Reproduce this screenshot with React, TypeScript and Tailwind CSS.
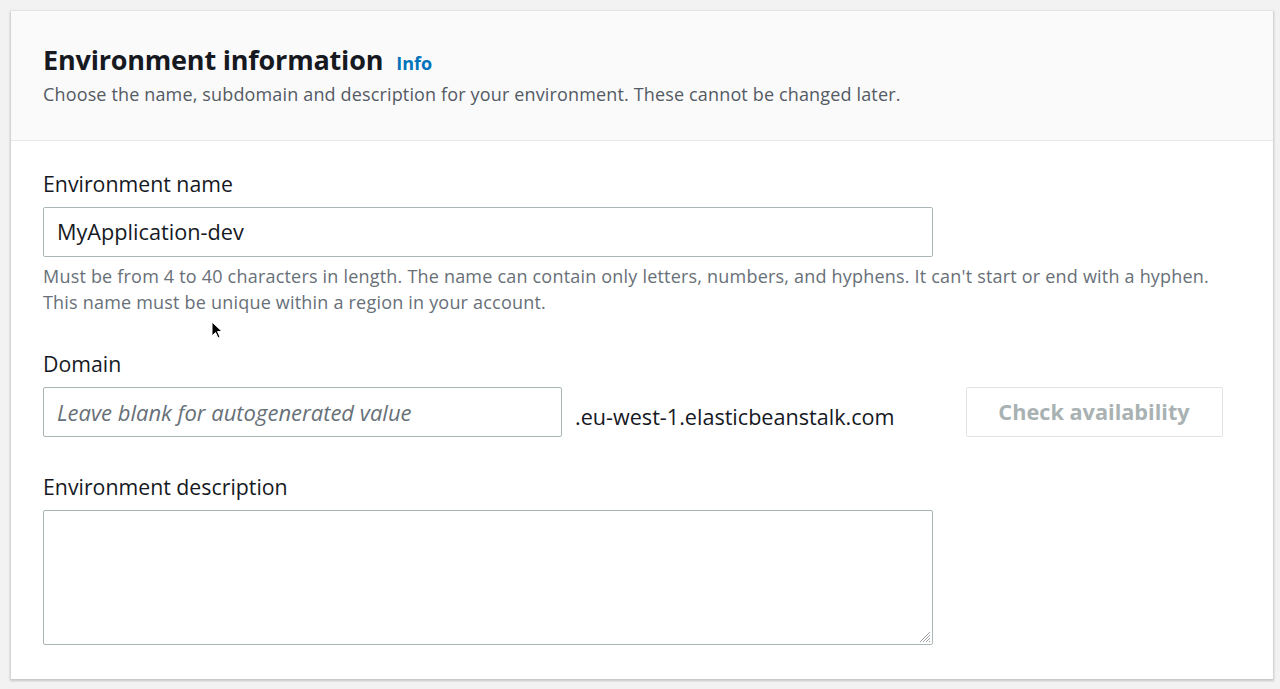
import React from "react";

export default function App() {
  const font = { fontFamily: '"Open Sans", "Noto Sans", Arial, sans-serif' };
  return (
    <div className="relative h-[689px] w-[1280px] overflow-hidden bg-[#f2f2f2] pl-[11px] pt-[11px]" style={font}>
      <div className="w-[1262px] h-[668px] bg-white shadow-[0_1px_2px_1px_rgba(0,0,0,0.18)] flex flex-col">
        <div className="h-[130px] bg-[#fafafa] border-b border-[#e6e6e6] px-[32px] pt-[32px]">
          <div className="flex items-baseline gap-[13px]">
            <h2 className="text-[27px] leading-[34px] font-bold text-[#16191f] tracking-[-0.2px]">Environment information</h2>
            <span className="text-[18px] font-bold text-[#0073bb]">Info</span>
          </div>
          <p className="mt-[4px] text-[18px] leading-[26px] tracking-[0.15px] text-[#545b64]">
            Choose the name, subdomain and description for your environment. These cannot be changed later.
          </p>
        </div>
        <div className="px-[32px] pt-[29px]">
          <label className="block text-[21.3px] leading-[28px] text-[#16191f]">Environment name</label>
          <div className="mt-[9px] w-[890px] h-[50px] border border-[#aab7b8] rounded-[2px] flex items-center px-[13px] text-[21.7px] text-[#16191f]">
            MyApplication-dev
          </div>
          <p className="mt-[6px] text-[18px] leading-[26px] tracking-[0.2px] text-[#687078]">
            Must be from 4 to 40 characters in length. The name can contain only letters, numbers, and hyphens. It can't start or end with a hyphen.
            <br />
            This name must be unique within a region in your account.
          </p>
          <label className="mt-[35px] block text-[21.3px] leading-[28px] text-[#16191f]">Domain</label>
          <div className="mt-[9px] flex items-center">
            <div className="w-[519px] h-[50px] border border-[#aab7b8] rounded-[2px] flex items-center px-[13px] text-[22px] italic text-[#687078]">
              Leave blank for autogenerated value
            </div>
            <span className="ml-[13px] mt-[10px] text-[21.6px] text-[#16191f]">.eu-west-1.elasticbeanstalk.com</span>
            <button className="ml-[71px] w-[257px] h-[50px] border border-[#e1e4e4] rounded-[2px] bg-white text-[21.7px] font-bold text-[#a9b2b3]">
              Check availability
            </button>
          </div>
          <label className="mt-[36px] block text-[21.3px] leading-[28px] text-[#16191f]">Environment description</label>
          <div className="relative mt-[9px] w-[890px] h-[135px] border border-[#aab7b8] rounded-[2px]">
            <svg className="absolute right-[1px] bottom-[1px]" width="14" height="14" viewBox="0 0 14 14">
              <path d="M13 3 L3 13 M13 6 L6 13 M13 9 L9 13 M13 12 L12 13" stroke="#9aa0a0" strokeWidth="1" />
            </svg>
          </div>
        </div>
      </div>
      <svg className="absolute left-[211px] top-[321px]" width="12" height="19" viewBox="0 0 12 19">
        <path d="M1 1 L1 15 L4.5 11.5 L7 17 L9 16 L6.5 10.5 L11 10.5 Z" fill="#000" stroke="#fff" strokeWidth="1" />
      </svg>
    </div>
  );
}
